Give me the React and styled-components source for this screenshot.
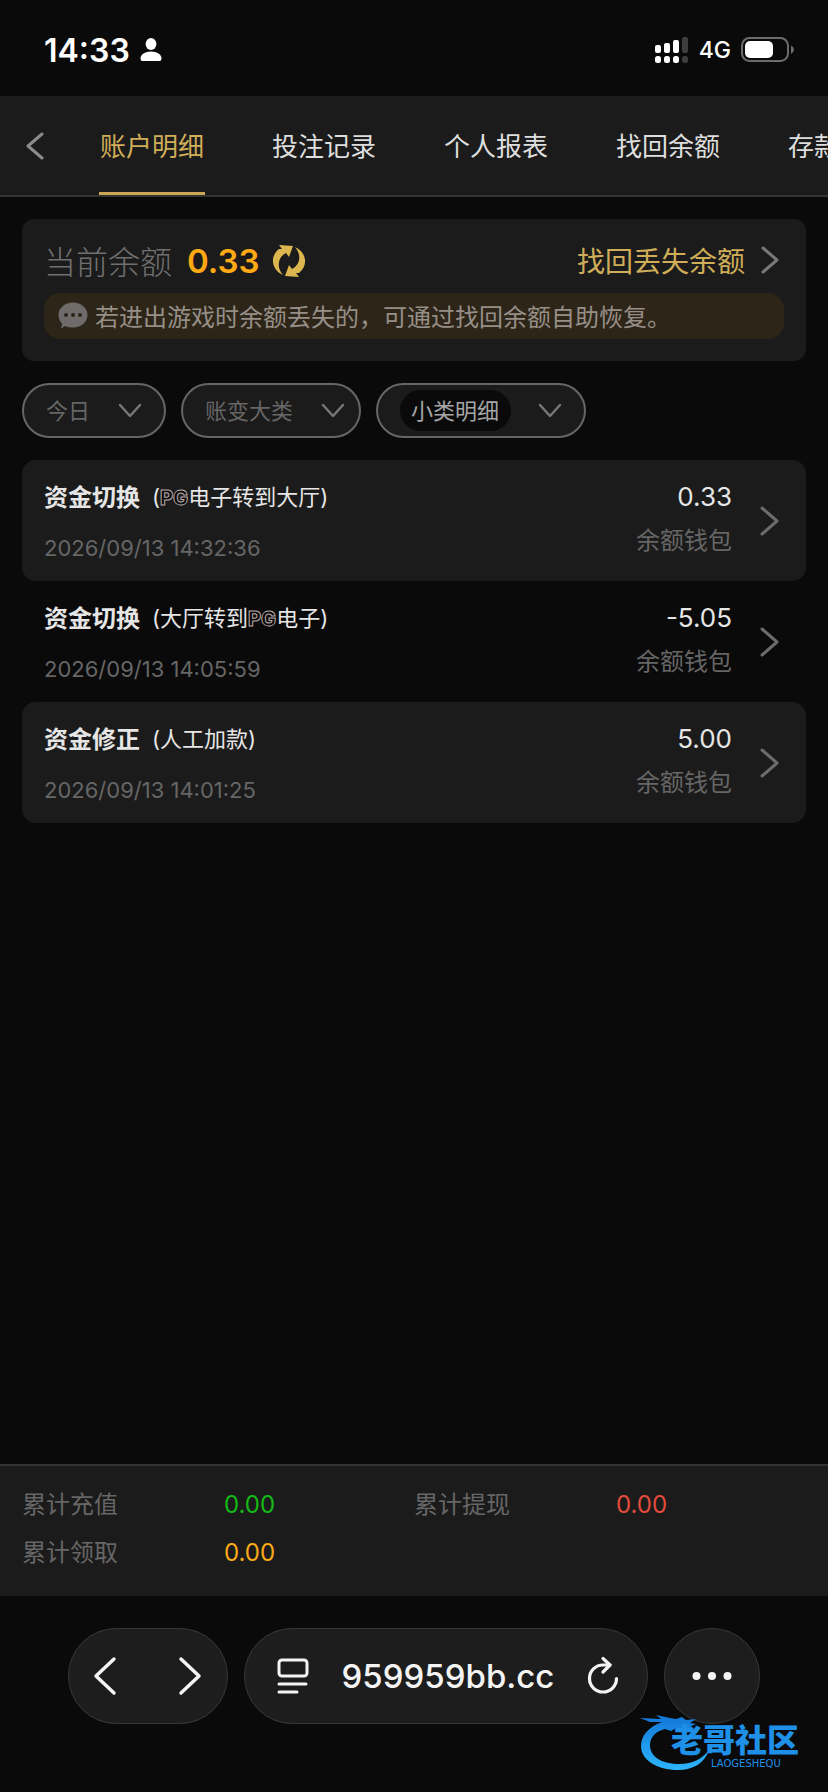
import React from 'react'
import styled, { createGlobalStyle } from 'styled-components'

const records = [
    { title: '资金切换', before: '(', pg: true, after: '电子转到大厅)', date: '2026/09/13 14:32:36', amount: '0.33' },
    { title: '资金切换', before: '(大厅转到', pg: true, after: '电子)', date: '2026/09/13 14:05:59', amount: '-5.05' },
    { title: '资金修正', before: '(人工加款)', date: '2026/09/13 14:01:25', amount: '5.00' },
]

const tabs = ['账户明细', '投注记录', '个人报表', '找回余额', '存款记录']

function Chevron({ size, d, stroke = 3 }) {
    return (
        <svg width={size[0]} height={size[1]} fill="none" stroke="currentColor" strokeWidth={stroke} strokeLinecap="round" strokeLinejoin="round">
            <path d={d} />
        </svg>
    )
}

function StatusBar() {
    return (
        <Status>
            <Clock>14:33</Clock>
            <svg width="22" height="24" fill="#fff">
                <ellipse cx="11" cy="6" rx="5.4" ry="6" />
                <path d="M0.5 20.5C0.5 16.5 5 13.5 11 13.5S21.5 16.5 21.5 20.5Q21.5 23 19.5 23H2.5Q0.5 23 0.5 20.5Z" />
            </svg>
            <StatusRight>
                <svg width="34" height="27" fill="#fff">
                    <rect x="0" y="8" width="6" height="8" rx="2" />
                    <rect x="9" y="6" width="6" height="10" rx="2" />
                    <rect x="18" y="3" width="6" height="13" rx="2" />
                    <rect x="27" y="0" width="6" height="16" rx="2" fill="#3d3d3d" />
                    <rect x="0" y="19" width="6" height="7" rx="2.5" />
                    <rect x="9" y="19" width="6" height="7" rx="2.5" />
                    <rect x="18" y="19" width="6" height="7" rx="2.5" />
                    <rect x="27" y="19" width="6" height="7" rx="2.5" fill="#3d3d3d" />
                </svg>
                <Network>4G</Network>
                <svg width="54" height="26">
                    <rect x="1" y="1" width="46" height="23" rx="7.5" fill="none" stroke="#6c6c6c" strokeWidth="2" />
                    <rect x="4" y="4" width="28" height="17" rx="5" fill="#fff" />
                    <path d="M50 8.5Q53 10 53 12.5T50 17Z" fill="#6c6c6c" />
                </svg>
            </StatusRight>
        </Status>
    )
}

function Filter({ label, end, chip }) {
    return (
        <FilterPill $end={end}>
            <FilterSelect aria-label={label} $chip={chip}>
                <option>{label}</option>
            </FilterSelect>
            <Chevron size={[24, 16]} d="M2 2L12 13L22 2" stroke={2.5} />
        </FilterPill>
    )
}

function Record({ item, striped }) {
    return (
        <RecordRow $striped={striped}>
            <RecordMain>
                <RecordTitle>
                    {item.title}
                    <RecordNote>
                        {item.before}
                        {item.pg && <Pg>PG</Pg>}
                        {item.after}
                    </RecordNote>
                </RecordTitle>
                <RecordDate>{item.date}</RecordDate>
            </RecordMain>
            <RecordSide>
                <Amount>{item.amount}</Amount>
                <Wallet>余额钱包</Wallet>
            </RecordSide>
            <Chevron size={[19, 32]} d="M2 3L17 16L2 29" />
        </RecordRow>
    )
}

function BrowserBar() {
    return (
        <Browser>
            <NavPill>
                <IconButton aria-label="后退">
                    <Chevron size={[24, 40]} d="M21 3L3 20L21 37" stroke={3.5} />
                </IconButton>
                <IconButton aria-label="前进">
                    <Chevron size={[24, 40]} d="M3 3L21 20L3 37" stroke={3.5} />
                </IconButton>
            </NavPill>
            <AddressPill>
                <IconButton aria-label="页面菜单">
                    <svg width="32" height="38" fill="none" stroke="#f4f4f4" strokeWidth="3" strokeLinecap="round">
                        <rect x="2" y="3" width="28" height="16" rx="3" />
                        <path d="M2 27H29M2 35H20" />
                    </svg>
                </IconButton>
                <Address>959959bb.cc</Address>
                <IconButton aria-label="刷新">
                    <svg width="32" height="40" fill="none" stroke="#f4f4f4" strokeWidth="3.2" strokeLinecap="round" strokeLinejoin="round">
                        <path d="M23 9H16A13.5 13.5 0 1 0 29.5 22.500" />
                        <path d="M16 2.5L23 9L16 16" />
                    </svg>
                </IconButton>
            </AddressPill>
            <MoreButton aria-label="更多">
                <svg width="40" height="10" fill="#f4f4f4">
                    <circle cx="4.5" cy="5" r="4" />
                    <circle cx="20" cy="5" r="4" />
                    <circle cx="35.5" cy="5" r="4" />
                </svg>
            </MoreButton>
            <Community>
                <svg width="72" height="58">
                    <defs>
                        <linearGradient id="dragon" x1="0" y1="0" x2="0" y2="1">
                            <stop offset="0" stopColor="#1277d8" />
                            <stop offset="1" stopColor="#2cb4fb" />
                        </linearGradient>
                    </defs>
                    <path fill="url(#dragon)" d="M22 8C8 13 1 22 1 32C1 46 17 56 38 56C53 56 65 49 69 36C62 45 52 50 40 50C22 50 10 43 10 31C10 23 16 17 25 15L31 17L36 14L43 17L47 14L54 15L51 12L56 10L50 9L56 5L46 6L42 3L36 5L30 4L16 1L21 5L0 4L10 8Z" />
                </svg>
                <CommunityText>
                    <CommunityName>老哥社区</CommunityName>
                    <CommunityLatin>LAOGESHEQU</CommunityLatin>
                </CommunityText>
            </Community>
        </Browser>
    )
}

export default function App() {
    return (
        <Page>
            <GlobalStyle />
            <StatusBar />
            <TabBar>
                <BackButton aria-label="返回">
                    <Chevron size={[18, 28]} d="M16 2L2 14L16 26" />
                </BackButton>
                <Tabs>
                    {tabs.map((tab, i) => <Tab key={tab} $active={i === 0}>{tab}</Tab>)}
                </Tabs>
            </TabBar>

            <Content>
                <BalanceCard>
                    <BalanceRow>
                        <BalanceLabel>当前余额</BalanceLabel>
                        <Balance>0.33</Balance>
                        <RefreshButton aria-label="刷新余额">
                            <svg width="34" height="34" fill="#dcb750">
                                <path d="M7 1L21 2L17 13L14 9C6 13 4 23 11 31C0 26 -3 13 7 5L10 5Z" />
                                <path d="M27 33L13 32L17 21L20 25C28 21 30 11 23 3C34 8 37 21 27 29L24 29Z" />
                            </svg>
                        </RefreshButton>
                        <RecoverLink href="#recover">
                            找回丢失余额
                            <Chevron size={[19, 28]} d="M2 2L16 14L2 26" />
                        </RecoverLink>
                    </BalanceRow>
                    <Notice>
                        <svg width="30" height="27">
                            <path d="M15 0.5C23 0.5 29.5 6 29.5 13S23 25.5 15 25.5Q10 25.5 7 24Q5 26 2.5 26Q4.5 24 4 21.5Q0.5 18 0.5 13C0.5 6 7 0.5 15 0.5Z" fill="#6f6b6b" />
                            <g fill="#2e2519">
                                <circle cx="8" cy="13" r="2" />
                                <circle cx="15" cy="13" r="2" />
                                <circle cx="22" cy="13" r="2" />
                            </g>
                        </svg>
                        若进出游戏时余额丢失的，可通过找回余额自助恢复。
                    </Notice>
                </BalanceCard>

                <Filters>
                    <Filter label="今日" end={22} />
                    <Filter label="账变大类" end={14} />
                    <Filter label="小类明细" end={22} chip />
                </Filters>

                <Records>
                    {records.map((item, i) => <Record key={item.date} item={item} striped={i % 2 === 0} />)}
                </Records>
            </Content>

            <Totals>
                <TotalLabel>累计充值</TotalLabel>
                <TotalValue $color="#14b914">0.00</TotalValue>
                <TotalLabel>累计提现</TotalLabel>
                <TotalValue $color="#e24c3d">0.00</TotalValue>
                <TotalLabel>累计领取</TotalLabel>
                <TotalValue $color="#f9a919">0.00</TotalValue>
            </Totals>

            <BrowserBar />
        </Page>
    )
}

const GlobalStyle = createGlobalStyle`
    * {
        box-sizing: border-box;
    }
    body {
        margin: 0;
        background: #0a0a0a;
        color: #e6e6e6;
        font-family: Inter, "Noto Sans CJK SC", sans-serif;
    }
    button, select {
        padding: 0;
        border: 0;
        background: none;
        color: inherit;
        font: inherit;
    }
    svg {
        display: block;
        flex: none;
    }
`

const Page = styled.div`
    display: flex;
    flex-direction: column;
    min-height: 100vh;
    overflow: hidden;
`

const Status = styled.header`
    display: flex;
    align-items: center;
    gap: 10px;
    height: 96px;
    padding: 4px 33px 0 44px;
    color: #fff;
`

const Clock = styled.span`
    font-size: 32px;
    font-weight: 600;
`

const StatusRight = styled.div`
    display: flex;
    align-items: center;
    gap: 10px;
    margin-left: auto;
`

const Network = styled.span`
    font-size: 23px;
    font-weight: 500;
`

const TabBar = styled.nav`
    display: flex;
    height: 101px;
    border-bottom: 2px solid #333;
    background: #1b1b1b;
`

const BackButton = styled.button`
    flex: none;
    width: 99px;
    padding-left: 26px;
    color: #8c8c8c;
`

const Tabs = styled.div`
    display: flex;
    gap: 66px;
    overflow: hidden;
`

const Tab = styled.button`
    flex: none;
    min-width: 106px;
    padding-top: 1px;
    border-bottom: 3px solid ${props => props.$active ? '#c9a755' : 'transparent'};
    color: ${props => props.$active ? '#d0ad58' : '#dedede'};
    font-size: 26px;
    white-space: nowrap;
`

const Content = styled.main`
    flex: 1;
    padding: 22px;
`

const BalanceCard = styled.section`
    padding: 22px;
    border-radius: 12px;
    background: #1b1b1b;
`

const BalanceRow = styled.div`
    display: flex;
    align-items: center;
    height: 40px;
    margin-bottom: 12px;
`

const BalanceLabel = styled.span`
    padding-bottom: 3px;
    color: #707070;
    font-size: 32px;
    font-weight: 300;
`

const Balance = styled.strong`
    margin: 0 12px 0 15px;
    color: #ffa914;
    font-size: 33px;
    font-weight: 600;
`

const RefreshButton = styled.button`
    flex: none;
`

const RecoverLink = styled.a`
    display: flex;
    align-items: center;
    gap: 16px;
    margin-left: auto;
    padding: 0 4px 2px 0;
    color: #d0ad58;
    font-size: 28px;
    text-decoration: none;

    svg {
        color: #777;
    }
`

const Notice = styled.p`
    display: flex;
    align-items: center;
    gap: 7px;
    height: 46px;
    margin: 0;
    padding: 0 14px 2px;
    border-radius: 16px;
    background: #2e2519;
    color: #968f87;
    font-size: 24px;
    white-space: nowrap;
`

const Filters = styled.div`
    display: flex;
    gap: 15px;
    margin: 22px 0;
`

const FilterPill = styled.div`
    display: flex;
    align-items: center;
    gap: 27px;
    height: 55px;
    padding: 0 ${props => props.$end}px 0 22px;
    border: 2px solid #666;
    border-radius: 28px;
    background: #1b1b1b;
    color: #777;
`

const FilterSelect = styled.select`
    appearance: none;
    height: 41px;
    padding: 0 ${props => props.$chip ? 11 : 0}px;
    border-radius: 21px;
    background: ${props => props.$chip ? '#0a0a0a' : 'none'};
    color: ${props => props.$chip ? '#a6a6a6' : '#666'};
    font-size: 22px;
`

const Records = styled.ul`
    margin: 0;
    padding: 0;
    list-style: none;
`

const RecordRow = styled.li`
    display: flex;
    height: 121px;
    padding: 0 27px 0 22px;
    border-radius: 14px;
    background: ${props => props.$striped ? '#1b1b1b' : 'none'};

    > svg {
        align-self: center;
        color: #6c6c6c;
    }
`

const RecordMain = styled.div`
    flex: 1;
    padding-top: 16px;
`

const RecordTitle = styled.div`
    display: flex;
    align-items: center;
    gap: 12px;
    height: 38px;
    font-size: 24px;
    font-weight: 700;
`

const RecordNote = styled.span`
    font-size: 22px;
    font-weight: 400;
`

const Pg = styled.span`
    color: #0a0a0a;
    font-size: 20px;
    font-weight: 800;
    -webkit-text-stroke: 1px #b9a9a4;
`

const RecordDate = styled.time`
    display: block;
    margin-top: 15px;
    color: #666;
    font-size: 22px;
    line-height: 38px;
`

const RecordSide = styled.div`
    padding: 18px 28px 0 0;
    text-align: right;
`

const Amount = styled.div`
    font-size: 26px;
    line-height: 38px;
`

const Wallet = styled.div`
    margin-top: 6px;
    color: #666;
    font-size: 24px;
    line-height: 38px;
`

const Totals = styled.footer`
    display: grid;
    grid-template-columns: 202px 1fr 202px 1fr;
    padding: 15px 22px 19px;
    border-top: 2px solid #333;
    background: #1b1b1b;
    font-size: 24px;
    line-height: 48px;
`

const TotalLabel = styled.span`
    color: #666;
`

const TotalValue = styled.span`
    color: ${props => props.$color};
`

const Browser = styled.div`
    position: relative;
    display: flex;
    gap: 16px;
    padding: 32px 68px 68px;
    color: #f4f4f4;
`

const Pill = styled.div`
    display: flex;
    align-items: center;
    justify-content: space-between;
    height: 96px;
    border: 1px solid #383838;
    border-radius: 48px;
    background: #1d1d1d;
`

const NavPill = styled(Pill)`
    width: 160px;
    padding: 0 25px 0 24px;
`

const AddressPill = styled(Pill)`
    flex: 1;
    padding: 0 28px 0 32px;
`

const IconButton = styled.button`
    flex: none;
`

const Address = styled.span`
    font-size: 33px;
    font-weight: 500;
`

const MoreButton = styled.button`
    display: flex;
    align-items: center;
    justify-content: center;
    width: 96px;
    height: 96px;
    border: 1px solid #383838;
    border-radius: 50%;
    background: #1d1d1d;
`

/* floats over the corner of the browser bar */
const Community = styled.div`
    position: absolute;
    right: 18px;
    bottom: 20px;
    display: flex;
    width: 170px;
`

const CommunityText = styled.div`
    margin: 10px 0 0 -41px;
    color: #1e90e8;
    white-space: nowrap;
`

const CommunityName = styled.div`
    display: flex;
    font-size: 32px;
    font-weight: 900;
    line-height: 34px;
`

const CommunityLatin = styled.div`
    padding-left: 40px;
    font-family: "DejaVu Sans", sans-serif;
    font-size: 10px;
    line-height: 11px;
`
